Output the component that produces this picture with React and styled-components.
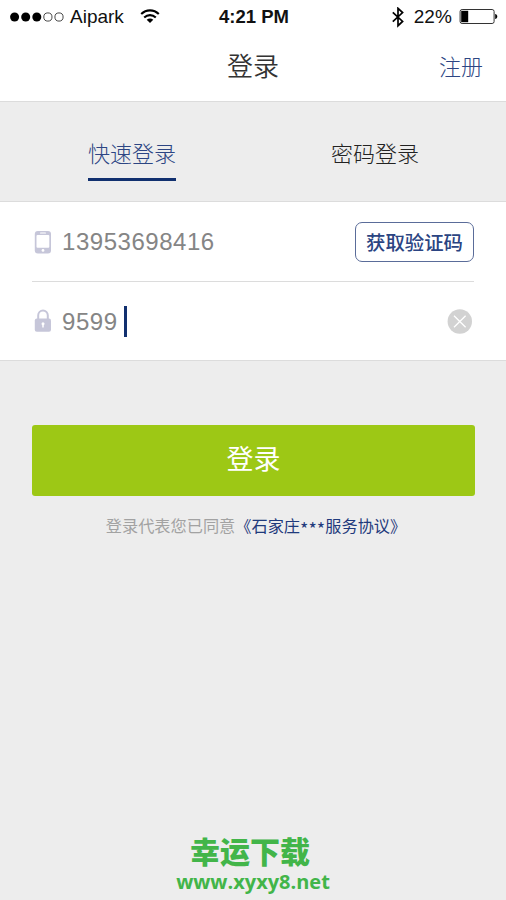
import React from 'react'
import styled, { createGlobalStyle } from 'styled-components'

const GlobalStyle = createGlobalStyle`
  * {
    box-sizing: border-box;
  }

  body {
    margin: 0;
    background-color: #ededed;
    font-family: 'Liberation Sans', 'Noto Sans CJK SC', sans-serif;
  }

  button {
    margin: 0;
    padding: 0;
    border: 0;
    background: none;
    font-family: inherit;
  }

  svg {
    display: block;
    flex: none;
  }
`

const Screen = styled.div`
  display: flex;
  flex-direction: column;
  width: 506px;
  height: 900px;
  overflow: hidden;
  background-color: #ededed;
`

const StatusBar = styled.div`
  display: grid;
  grid-template-columns: 1fr auto 1fr;
  align-items: center;
  height: 32px;
  padding: 0 8px 0 10px;
  background-color: #fff;
  color: #111;
  font-size: 19px;
  line-height: 34px;
`

const StatusGroup = styled.div`
  display: flex;
  align-items: center;
  justify-content: ${props => (props.$end ? 'flex-end' : 'flex-start')};
`

const Carrier = styled.span`
  margin: 0 16px 0 6px;
`

const Clock = styled.span`
  font-size: 18.5px;
  font-weight: bold;
`

const Percent = styled.span`
  margin: 0 7px 0 10px;
  letter-spacing: 0.1px;
`

const Header = styled.header`
  display: grid;
  grid-template-columns: 1fr auto 1fr;
  height: 70px;
  padding: 0 23px;
  border-bottom: 1px solid #dcdcdc;
  background-color: #fff;
  line-height: 66px;
`

const Title = styled.h1`
  grid-column: 2;
  margin: 0;
  color: #333;
  font-family: 'Noto Sans CJK SC', sans-serif;
  font-size: 26px;
  font-weight: 350;
`

const Register = styled.button`
  justify-self: end;
  color: #2c4583;
  font-size: 22px;
  font-weight: 300;
  line-height: 71px;
`

const Tabs = styled.nav`
  display: grid;
  grid-template-columns: 264px 222px;
  height: 100px;
  border-bottom: 1px solid #dcdcdc;
`

const Tab = styled.button`
  display: flex;
  justify-self: center;
  align-self: start;
  height: 79px;
  padding-top: 37px;
  border-bottom: 3px solid ${props => (props.$active ? '#11306f' : 'transparent')};
  color: ${props => (props.$active ? '#2c4583' : '#222')};
  font-size: 22px;
  font-weight: 300;
  line-height: 32px;
`

const Form = styled.div`
  height: 159px;
  padding: 0 32px;
  border-bottom: 1px solid #dcdcdc;
  background-color: #fff;
`

const Field = styled.div`
  display: flex;
  align-items: center;
  height: ${props => (props.$last ? '78px' : '80px')};
  border-bottom: ${props => (props.$last ? '0' : '1px solid #dcdcdc')};
`

const Value = styled.span`
  margin-left: 8px;
  padding-top: 1px;
  color: #858585;
  font-size: 24px;
  letter-spacing: 0.53px;
`

const Caret = styled.span`
  width: 3px;
  height: 31px;
  margin-left: 6px;
  background-color: #11306f;
`

const CodeButton = styled.button`
  width: 119px;
  height: 40px;
  margin-left: auto;
  border: 1px solid #5a6c99;
  border-radius: 7px;
  color: #2b4482;
  font-size: 19.4px;
  font-weight: 500;
  line-height: 40px;
`

const ClearButton = styled.button`
  margin: 0 2px 0 auto;
`

const Submit = styled.button`
  height: 71px;
  margin: 64px 31px 0 32px;
  border-radius: 3px;
  background-color: #9dc815;
  color: #fff;
  font-size: 27px;
  font-weight: 400;
  line-height: 67px;
`

const Agreement = styled.p`
  display: flex;
  justify-content: center;
  margin: 17px 0 0;
  padding-left: 6px;
  color: #a2a2a2;
  font-family: 'Noto Sans CJK SC', sans-serif;
  font-size: 16.2px;
  line-height: 24px;
`

const AgreementLink = styled.a`
  color: #1f3a7c;
`

const Mask = styled.span`
  font-size: 18px;
  line-height: 0;
  vertical-align: -4px;
`

const Footer = styled.footer`
  margin-top: auto;
  padding-bottom: 5px;
  color: #42b549;
  font-weight: bold;
  text-align: center;
`

const SiteName = styled.div`
  padding-right: 6px;
  font-family: 'Noto Sans CJK SC', sans-serif;
  font-size: 30px;
  font-weight: 900;
  line-height: 36px;
`

const SiteUrl = styled.div`
  font-family: 'Open Sans', sans-serif;
  font-size: 20px;
  line-height: 27px;
`

const SignalIcon = () => (
  <svg width="54" height="12" viewBox="0 0 54 12">
    {[0, 1, 2, 3, 4].map(i => (
      <circle
        key={i}
        cx={4.6 + i * 11.1}
        cy="6"
        r={i < 3 ? 4.5 : 4.1}
        fill={i < 3 ? '#000' : 'none'}
        stroke={i < 3 ? 'none' : '#333'}
        strokeWidth="0.9"
      />
    ))}
  </svg>
)

const WifiIcon = () => (
  <svg width="20" height="16" viewBox="0 0 20 16" fill="none" stroke="#000" strokeWidth="2.1">
    <path d="M1.2 5C6.2.1 13.8.1 18.8 5M4.2 8.5C7.6 5.3 12.4 5.3 15.8 8.5" />
    <path d="M10 14 6.7 10.8C8.7 9.2 11.3 9.2 13.3 10.8Z" fill="#000" stroke="none" />
  </svg>
)

const BluetoothIcon = () => (
  <svg width="12" height="21" viewBox="0 0 12 21" fill="none" stroke="#000" strokeWidth="1.7">
    <path d="M.8 5.3 10.6 14.5 6 18.7V1.3L10.6 5.5 .8 14.7" />
  </svg>
)

const BatteryIcon = () => (
  <svg width="39" height="16" viewBox="0 0 39 16">
    <rect x="1.1" y=".5" width="34" height="14" rx="2" fill="none" stroke="#333" strokeWidth="1" />
    <rect x="2.2" y="1.8" width="7" height="11.4" fill="#000" />
    <path d="M36.2 5C39 5.6 39 9.4 36.2 10Z" fill="#000" />
  </svg>
)

const PhoneIcon = () => (
  <svg width="22" height="24" viewBox="0 0 22 24">
    <rect x="2.8" y="1" width="16.2" height="22.4" rx="3" fill="#c6c6d9" />
    <rect x="4.5" y="5" width="12.8" height="12.8" rx="1" fill="#fff" />
    <rect x="8" y="2.4" width="6" height="1.2" rx=".6" fill="#fff" />
    <circle cx="11" cy="20.4" r="1.4" fill="#fff" />
  </svg>
)

const LockIcon = () => (
  <svg width="22" height="24" viewBox="0 0 22 24">
    <path d="M6.2 11V6.3a4.8 4.8 0 0 1 9.6 0V11" fill="none" stroke="#c6c6d9" strokeWidth="2" />
    <rect x="2.8" y="9.5" width="16.2" height="13.3" rx="2" fill="#c6c6d9" />
    <path d="M11 18.5V15" stroke="#fff" strokeWidth="1.5" />
    <circle cx="11" cy="14.8" r="1.5" fill="#fff" />
  </svg>
)

const ClearIcon = () => (
  <svg width="25" height="25" viewBox="0 0 25 25">
    <circle cx="12.8" cy="12.5" r="12.2" fill="#d2d2d2" />
    <path d="M7 6.7 18.6 18.3M18.6 6.7 7 18.3" stroke="#fff" strokeWidth="1.3" />
  </svg>
)

const App = () => (
  <>
    <GlobalStyle />
    <Screen>
      <StatusBar>
        <StatusGroup>
          <SignalIcon />
          <Carrier>Aipark</Carrier>
          <WifiIcon />
        </StatusGroup>
        <Clock>4:21 PM</Clock>
        <StatusGroup $end>
          <BluetoothIcon />
          <Percent>22%</Percent>
          <BatteryIcon />
        </StatusGroup>
      </StatusBar>
      <Header>
        <Title>登录</Title>
        <Register>注册</Register>
      </Header>
      <Tabs>
        <Tab $active>快速登录</Tab>
        <Tab>密码登录</Tab>
      </Tabs>
      <Form>
        <Field>
          <PhoneIcon />
          <Value>13953698416</Value>
          <CodeButton>获取验证码</CodeButton>
        </Field>
        <Field $last>
          <LockIcon />
          <Value>9599</Value>
          <Caret />
          <ClearButton aria-label="清除">
            <ClearIcon />
          </ClearButton>
        </Field>
      </Form>
      <Submit>登录</Submit>
      <Agreement>
        登录代表您已同意
        <AgreementLink>
          《石家庄<Mask>***</Mask>服务协议》
        </AgreementLink>
      </Agreement>
      <Footer>
        <SiteName>幸运下载</SiteName>
        <SiteUrl>www.xyxy8.net</SiteUrl>
      </Footer>
    </Screen>
  </>
)

export default App
